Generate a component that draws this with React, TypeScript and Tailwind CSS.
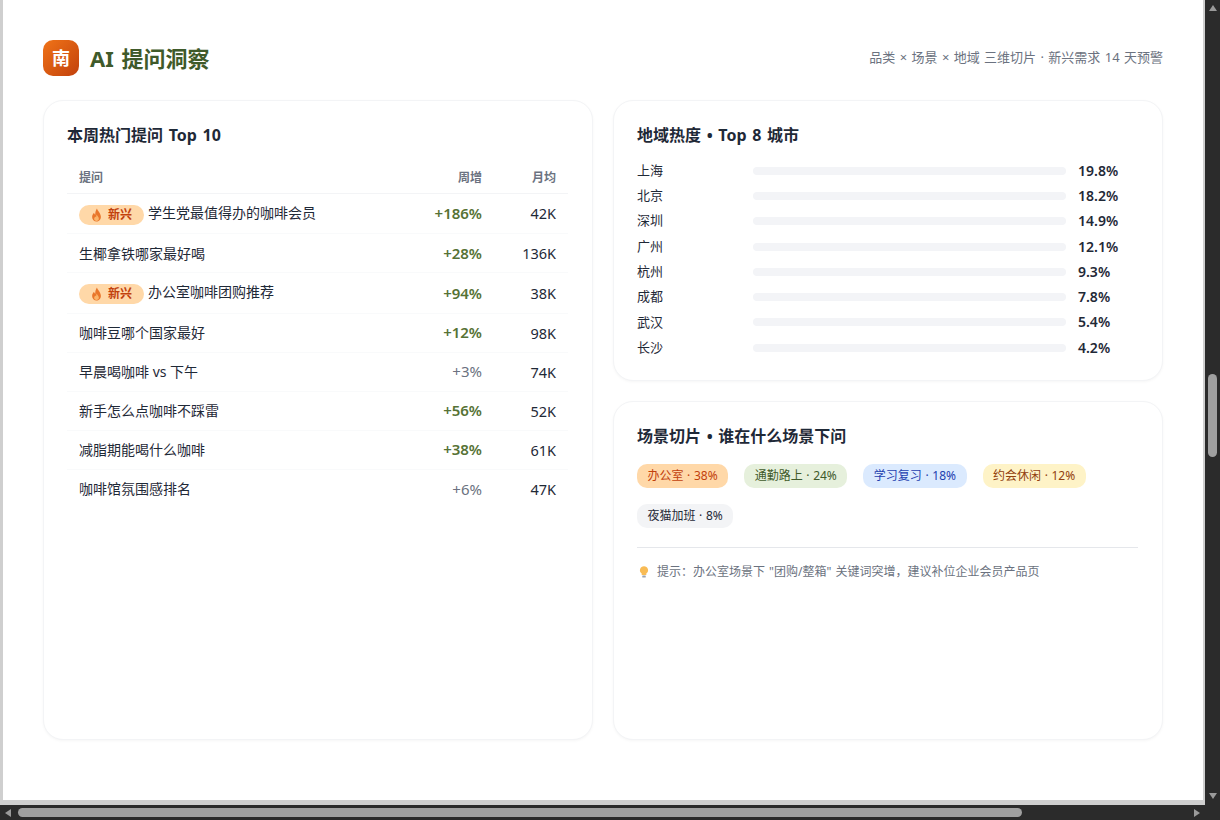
const questions = [
  { text: '学生党最值得办的咖啡会员', isNew: true, growth: '+186%', strong: true, monthly: '42K' },
  { text: '生椰拿铁哪家最好喝', growth: '+28%', strong: true, monthly: '136K' },
  { text: '办公室咖啡团购推荐', isNew: true, growth: '+94%', strong: true, monthly: '38K' },
  { text: '咖啡豆哪个国家最好', growth: '+12%', strong: true, monthly: '98K' },
  { text: '早晨喝咖啡 vs 下午', growth: '+3%', strong: false, monthly: '74K' },
  { text: '新手怎么点咖啡不踩雷', growth: '+56%', strong: true, monthly: '52K' },
  { text: '减脂期能喝什么咖啡', growth: '+38%', strong: true, monthly: '61K' },
  { text: '咖啡馆氛围感排名', growth: '+6%', strong: false, monthly: '47K' },
]

const cities = [
  { name: '上海', share: '19.8%' },
  { name: '北京', share: '18.2%' },
  { name: '深圳', share: '14.9%' },
  { name: '广州', share: '12.1%' },
  { name: '杭州', share: '9.3%' },
  { name: '成都', share: '7.8%' },
  { name: '武汉', share: '5.4%' },
  { name: '长沙', share: '4.2%' },
]

const scenes = [
  { label: '办公室 · 38%', className: 'bg-[#ffd8a8] text-[#c2410c]' },
  { label: '通勤路上 · 24%', className: 'bg-[#e6f0dc] text-[#3f5a2a]' },
  { label: '学习复习 · 18%', className: 'bg-[#dbeafe] text-[#1e40af]' },
  { label: '约会休闲 · 12%', className: 'bg-[#fef3c7] text-[#92400e]' },
  { label: '夜猫加班 · 8%', className: 'bg-[#f3f4f6] text-[#1f2937]' },
]

function Card({ className, children }: { className: string; children: React.ReactNode }) {
  return (
    <div className={`rounded-[20px] border border-[#f3f4f6] bg-white pl-[23px] pr-6 pt-6 shadow-[0_1px_3px_rgba(0,0,0,0.04)] ${className}`}>
      {children}
    </div>
  )
}

function FlameIcon() {
  return (
    <svg viewBox="0 0 12 16" className="h-[14px] w-[11px]">
      <path d="M6.5 0.5C7 3 10.8 5.5 11 10c.1 3.300-2.300 5.500-5 5.500S1 13.300 1 10.200C1 8 2.300 6.600 3.200 5.500c.2 1.200.7 1.900 1.400 2.200C4.500 5 5 2.500 6.500.5z" fill="#e9762b" />
      <path d="M6.300 7.500c.3 1.500 2.400 2.700 2.400 4.900 0 1.500-1.200 2.500-2.700 2.500s-2.700-1-2.700-2.500c0-1.300.9-2 1.500-2.800.2.500.4.800.8 1 0-1.100.2-2 .7-3.100z" fill="#fbb56a" />
    </svg>
  )
}

function NewBadge() {
  return (
    <span className="mr-1 inline-flex h-5 w-[65px] items-center justify-center gap-[6px] rounded-full bg-[#ffd8a8] align-[-4px] text-xs font-semibold leading-none text-[#c2410c]">
      <FlameIcon />
      新兴
    </span>
  )
}

function TopQuestions() {
  return (
    <Card className="w-[550px]">
      <h2 className="text-base font-bold leading-5 text-[#1f2937] [word-spacing:1.5px]">本周热门提问 Top 10</h2>
      <table className="mt-4 w-full border-collapse text-sm">
        <thead>
          <tr className="border-b border-[#f3f4f6]">
            <th className="h-8 px-3 pt-[2px] text-left text-xs font-semibold text-[#6b7280]">提问</th>
            <th className="h-8 px-3 pt-[2px] text-right text-xs font-semibold text-[#6b7280]">周增</th>
            <th className="h-8 w-[74px] px-3 pt-[2px] text-right text-xs font-semibold text-[#6b7280]">月均</th>
          </tr>
        </thead>
        <tbody>
          {questions.map(q => (
            <tr key={q.text} className={`border-b border-[#f9fafb] last:border-b-0 ${q.isNew ? 'h-[40.5px]' : 'h-[39px]'}`}>
              <td className="px-3 pt-px text-[#1f2937]">
                {q.isNew && <NewBadge />}
                {q.text}
              </td>
              <td className={`px-3 pt-px text-right text-[15px] ${q.strong ? 'font-semibold text-[#567235]' : 'text-[#6b7280]'}`}>{q.growth}</td>
              <td className="px-3 pt-px text-right text-[14.5px] text-[#1f2937]">{q.monthly}</td>
            </tr>
          ))}
        </tbody>
      </table>
    </Card>
  )
}

function CityHeat() {
  return (
    <Card className="h-[281px]">
      <h2 className="text-base font-bold leading-5 text-[#1f2937] [word-spacing:1.5px]">地域热度 • Top 8 城市</h2>
      <div className="mt-[13px] flex flex-col">
        {cities.map(c => (
          <div key={c.name} className="flex h-[25.3px] items-center text-[13px] text-[#1f2937]">
            <span className="w-[116px]">{c.name}</span>
            <div className="h-2 w-[313px] rounded-full bg-[#f3f4f7]" />
            <span className="ml-3 text-sm font-semibold">{c.share}</span>
          </div>
        ))}
      </div>
    </Card>
  )
}

function SceneSlices() {
  return (
    <Card className="flex-1">
      <h2 className="text-base font-bold leading-5 text-[#1f2937] [word-spacing:1.5px]">场景切片 • 谁在什么场景下问</h2>
      <div className="mt-[18px] flex flex-wrap gap-x-4 gap-y-4">
        {scenes.map(s => (
          <span key={s.label} className={`flex h-6 items-center rounded-[10px] px-[10.5px] text-xs [word-spacing:0.5px] ${s.className}`}>
            {s.label}
          </span>
        ))}
      </div>
      <div className="mt-[19px] flex items-center gap-[6px] border-t border-[#e5e7eb] pt-4 text-xs text-[#6b7280] [word-spacing:1px]">
        <svg viewBox="0 0 24 24" className="h-[14px] w-[14px]">
          <path d="M12 2a7 7 0 0 0-4 12.700V17h8v-2.300A7 7 0 0 0 12 2z" fill="#f8bb55" />
          <rect x="9" y="18" width="6" height="3.500" rx="1" fill="#9ca3af" />
        </svg>
        提示：办公室场景下 "团购/整箱" 关键词突增，建议补位企业会员产品页
      </div>
    </Card>
  )
}

function ScrollArrow({ d }: { d: string }) {
  return (
    <svg viewBox="0 0 10 10" className="h-[10px] w-[10px] fill-[#9a9a9a]">
      <path d={d} />
    </svg>
  )
}

export default function App() {
  return (
    <div
      className="flex h-[820px] w-[1220px] overflow-hidden bg-[#2b2b2b]"
      style={{ fontFamily: '"Noto Sans", "Noto Sans CJK SC", sans-serif' }}
    >
      <div className="flex w-[1205px] flex-col">
        <div className="h-[805px] border-b-[5px] border-l-[3px] border-r-[2px] border-[#cfcfcf] bg-white">
          <div className="pl-10 pr-[40px] pt-10">
            <header className="flex h-9 w-[1120px] items-center">
              <div className="flex h-9 w-9 items-center justify-center rounded-[10px] bg-gradient-to-br from-[#f07318] to-[#c2410c] text-lg font-bold text-white">
                南
              </div>
              <h1 className="ml-[11px] text-[22px] font-bold text-[#3f5a2a] [word-spacing:2px]">AI 提问洞察</h1>
              <p className="ml-auto text-[13px] text-[#6b7280] [word-spacing:1px]">品类 × 场景 × 地域 三维切片 · 新兴需求 14 天预警</p>
            </header>
            <div className="mt-6 grid h-[640px] w-[1120px] grid-cols-2 gap-5">
              <TopQuestions />
              <div className="flex flex-col gap-5">
                <CityHeat />
                <SceneSlices />
              </div>
            </div>
          </div>
        </div>
        <div className="flex h-[15px] items-center px-[3px]">
          <ScrollArrow d="M8 1v8L2 5z" />
          <div className="ml-[5px] h-[9px] w-[1004px] rounded-full bg-[#a0a0a0]" />
          <div className="flex-1" />
          <ScrollArrow d="M2 1v8l6-4z" />
        </div>
      </div>
      <div className="flex w-[15px] flex-col items-center pt-[3px]">
        <ScrollArrow d="M5 2l4 6H1z" />
        <div className="mt-[361px] h-[83px] w-[9px] rounded-full bg-[#a0a0a0]" />
        <div className="mt-[334px]">
          <ScrollArrow d="M1 2h8L5 8z" />
        </div>
      </div>
    </div>
  )
}
